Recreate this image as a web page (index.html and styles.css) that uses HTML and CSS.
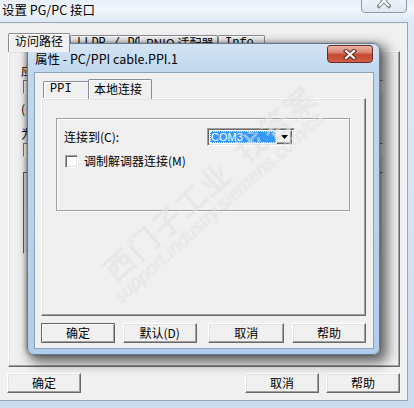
FILE: index.html
```html
<!DOCTYPE html>
<html lang="zh-CN">
<head>
<meta charset="utf-8">
<title>设置 PG/PC 接口</title>
<link rel="stylesheet" href="styles.css">
</head>
<body>
<div class="screen">
  <div class="win-outer">
    <div class="titlebar">
      <span class="title">设置 PG/PC 接口</span>
      <span class="close-grey">
        <svg width="14" height="10" viewBox="0 0 14 10"><path d="M2 -3 L12 7 M12 -3 L2 7" stroke="#7d8896" stroke-width="4" stroke-linecap="square"/><path d="M2 -3 L12 7 M12 -3 L2 7" stroke="#fff" stroke-width="2"/></svg>
      </span>
    </div>
    <div class="client">
      <div class="tabs">
        <div class="tab active">访问路径</div>
        <div class="tab mono">LLDP / DCP</div>
        <div class="tab">PNIO 适配器</div>
        <div class="tab mono">Info</div>
      </div>
      <div class="panel outer-panel">
        <div class="lbl">应</div>
        <div class="field">S</div>
        <div class="lbl paren">(</div>
        <div class="lbl">为</div>
        <div class="field">I</div>
        <div class="listbox"></div>
        <div class="lbl paren2">(</div>
      </div>
      <div class="btnrow">
        <button class="btn">确定</button>
        <span class="spacer"></span>
        <button class="btn">取消</button>
        <button class="btn">帮助</button>
      </div>
    </div>
  </div>

  <div class="win-inner">
    <div class="ititlebar">
      <span class="ititle">属性 - PC/PPI cable.PPI.1</span>
      <span class="close-red">
        <svg width="16" height="11" viewBox="0 0 16 11"><path d="M4 2 L12 9 M12 2 L4 9" stroke="#5a2a22" stroke-width="4.2" stroke-linecap="square"/><path d="M4 2 L12 9 M12 2 L4 9" stroke="#fff" stroke-width="2.2" stroke-linecap="square"/></svg>
      </span>
    </div>
    <div class="iclient">
      <div class="tabs itabs">
        <div class="tab mono ppi">PPI</div>
        <div class="tab active">本地连接</div>
      </div>
      <div class="panel inner-panel">
        <div class="group">
          <div class="row">
            <span class="rlabel">连接到(C):</span>
            <div class="combo">
              <span class="combo-text"><span class="sel">COM3</span></span>
              <span class="combo-btn"><svg width="7" height="4" viewBox="0 0 7 4"><path d="M0 0 H7 L3.5 4 Z" fill="#000"/></svg></span>
            </div>
          </div>
          <label class="chkrow"><span class="chk"></span><span>调制解调器连接(M)</span></label>
        </div>
      </div>
      <div class="ibtnrow">
        <button class="btn default">确定</button>
        <button class="btn">默认(D)</button>
        <button class="btn">取消</button>
        <button class="btn">帮助</button>
      </div>
    </div>
  </div>

  <div class="watermark wm1">西门子工业&nbsp;&nbsp;找答案</div>
  <div class="watermark wm2">support.industry.siemens.com/cs</div>
</div>
</body>
</html>
```

FILE: styles.css
```css
* { box-sizing: border-box; }
html, body { margin: 0; padding: 0; }
body {
  font-family: "Noto Sans CJK SC", "Liberation Sans", sans-serif;
  font-size: 12px;
  color: #000;
  background: #fff;
}
.screen {
  position: relative;
  width: 414px;
  height: 408px;
  overflow: hidden;
  background: linear-gradient(180deg, #dfeaf6 0%, #d4e3f3 60%, #cadcf0 100%);
}
.win-outer { display: flex; flex-direction: column; width: 414px; height: 408px; }

.titlebar {
  height: 22px;
  flex: none;
  display: flex;
  align-items: flex-start;
  background: linear-gradient(180deg, #e6eef8 0%, #f1f6fc 45%, #dce8f5 100%);
}
.title {
  padding-left: 2px;
  margin-top: 2px;
  font-size: 12.5px;
  line-height: 16px;
  color: #000;
}
.close-grey {
  margin-left: auto;
  margin-right: 7px;
  margin-top: -6px;
  width: 46px;
  height: 19px;
  border: 1px solid #8d99a7;
  border-radius: 0 0 4px 4px;
  background: linear-gradient(180deg, #f3f6fa, #e1e8f1);
  display: flex;
  align-items: flex-end;
  justify-content: center;
  padding-bottom: 3px;
}

.client {
  width: 408px;
  height: 379px;
  background: #f0f0f0;
  border: 1px solid #9aa6b3;
  border-left: none;
  display: flex;
  flex-direction: column;
}

.tabs { display: flex; align-items: flex-end; padding-left: 8px; padding-top: 9px; height: 28px; flex: none; }
.tab {
  height: 16px;
  padding: 0 6px;
  line-height: 14px;
  font-size: 12px;
  border: 1px solid #898c95;
  border-bottom: none;
  border-radius: 2px 2px 0 0;
  box-shadow: inset 1px 1px #fff;
  background: #f0f0f0;
  white-space: nowrap;
  position: relative;
}
.tab.active { height: 19px; padding: 0 7px 0; z-index: 2; margin-bottom: -1px; }
.mono { font-family: "Liberation Mono", "DejaVu Sans Mono", monospace; font-size: 12px; }
.client > .tabs .tab:nth-child(2) { width: 69px; }
.client > .tabs .tab:nth-child(3) { width: 79px; }
.client > .tabs .tab:nth-child(4) { width: 47px; }
.client > .tabs .tab.active { width: 62px; padding-left: 6px; }

.panel {
  border: 1px solid;
  border-color: #fff #696969 #696969 #fff;
  box-shadow: inset -1px -1px #a0a0a0, inset 1px 1px #e3e3e3;
  background: #f0f0f0;
}
.outer-panel {
  margin-left: 8px;
  width: 392px;
  height: 316px;
  padding: 12px 0 0 12px;
  display: flex;
  flex-direction: column;
  align-items: flex-start;
}
.lbl { line-height: 14px; white-space: nowrap; }
.field {
  margin: 2px 0 0 2px;
  width: 360px;
  height: 14px;
  border: 1px solid #7a7a7a;
  border-right-color: #fff;
  border-bottom-color: #fff;
  background: #fff;
  font-size: 11px;
  line-height: 12px;
  padding-left: 2px;
}
.paren { margin-top: 8px; }
.outer-panel .lbl:nth-child(4) { margin-top: 11px; }
.listbox {
  margin: 15px 0 0 2px;
  width: 360px;
  height: 82px;
  border: 1px solid #5e5e5e;
  border-right-color: #fff;
  border-bottom-color: #fff;
  background: #e9e9e9;
}
.paren2 { margin-top: 12px; margin-left: 5px; }

.btnrow { display: flex; gap: 7px; padding: 6px 7px 0 7px; }
.spacer { flex: 1; }
.btn {
  width: 74px;
  height: 20px;
  font-family: "Noto Sans CJK SC", "Liberation Sans", sans-serif;
  font-size: 12px;
  line-height: 16px;
  padding: 0;
  color: #000;
  background: #f0f0f0;
  border: 1px solid;
  border-color: #fff #696969 #696969 #fff;
  box-shadow: inset -1px -1px #a0a0a0, inset 1px 1px #e3e3e3;
}
.btn.default {
  border-color: #646464;
  box-shadow: inset 1px 1px #fff, inset -1px -1px #a0a0a0;
}

/* inner window (floats over the desktop) */
.win-inner {
  position: absolute;
  left: 27px;
  top: 43px;
  width: 353px;
  height: 312px;
  border-radius: 7px;
  border: 1px solid #66788c;
  background: linear-gradient(180deg, #d3e3f4 0%, #bfd6ee 10%, #b2cdeb 100%);
  box-shadow: 5px 5px 12px 3px rgba(0,0,0,0.55), -1px 0 4px rgba(0,0,0,0.35);
  display: flex;
  flex-direction: column;
  padding: 0 5px 5px 6px;
}
.ititlebar { height: 28px; display: flex; align-items: flex-start; flex: none; }
.ititle { margin-top: 8px; margin-left: 1px; font-size: 12.5px; line-height: 14px; }
.close-red {
  margin-left: auto;
  margin-right: 1px;
  margin-top: 1px;
  width: 46px;
  height: 18px;
  border: 1px solid #6b2b22;
  border-radius: 3px 3px 4px 4px;
  background: linear-gradient(180deg, #eab3a5 0%, #d98672 40%, #c5472f 55%, #cf6148 100%);
  display: flex;
  align-items: center;
  justify-content: center;
}
.iclient {
  flex: 1;
  background: #f0f0f0;
  border: 1px solid #8da2b8;
  display: flex;
  flex-direction: column;
  padding: 0 7px 0 6px;
}
.itabs { padding-left: 2px; padding-top: 5px; height: 25px; }
.itabs .ppi { width: 46px; padding-left: 6px; height: 17px; }
.itabs .tab.active { width: 64px; margin-left: -1px; height: 20px; padding-left: 5px; padding-top: 2px; }
.inner-panel {
  width: 325px;
  height: 218px;
  padding: 19px 0 0 14px;
}
.group {
  width: 294px;
  height: 93px;
  border: 1px solid #a0a0a0;
  box-shadow: 1px 1px #fff, inset 1px 1px #fff;
  padding: 9px 0 0 7px;
}
.row { display: flex; align-items: center; gap: 0; }
.rlabel { width: 143px; line-height: 14px; }
.combo {
  width: 88px;
  height: 18px;
  display: flex;
  border: 1px solid;
  border-color: #a0a0a0 #fff #fff #a0a0a0;
  box-shadow: inset 1px 1px #696969, inset -1px -1px #e3e3e3;
  background: #fff;
  padding: 2px;
}
.combo-text { flex: 1; display: flex; }
.sel {
  flex: 1;
  background: #3399ff;
  color: #fff;
  font-family: "Liberation Sans", sans-serif;
  font-size: 11px;
  line-height: 12px;
  padding-left: 1px;
  outline: 1px dotted #fff;
  outline-offset: -1px;
}
.combo-btn {
  width: 16px;
  height: 14px;
  margin: -1px 0 0 0;
  background: #f0f0f0;
  border: 1px solid;
  border-color: #fff #696969 #696969 #fff;
  box-shadow: inset -1px -1px #a0a0a0;
  display: flex;
  align-items: center;
  justify-content: center;
}
.chkrow { display: flex; align-items: center; gap: 6px; margin-top: 8px; margin-left: 1px; line-height: 14px; }
.chk {
  width: 13px;
  height: 13px;
  background: #fff;
  border: 1px solid;
  border-color: #a0a0a0 #fff #fff #a0a0a0;
  box-shadow: inset 1px 1px #696969, inset -1px -1px #e3e3e3;
}
.ibtnrow { display: flex; justify-content: space-between; padding-top: 7px; width: 325px; }
.ibtnrow .btn:nth-child(2) { margin-right: 4px; }
.ibtnrow .btn:nth-child(3) { width: 76px; }

.watermark {
  position: absolute;
  color: rgba(255,255,255,0.4);
  text-shadow: 0 0 1px rgba(185,185,185,0.45);
  transform-origin: left bottom;
  white-space: nowrap;
  pointer-events: none;
}
.wm1 {
  left: 122px;
  top: 246px;
  font-size: 30px;
  letter-spacing: 2px;
  transform: rotate(-42deg);
}
.wm2 {
  left: 124px;
  top: 286px;
  font-family: "Liberation Sans", sans-serif;
  font-size: 19px;
  font-style: italic;
  transform: rotate(-42deg);
}
```
